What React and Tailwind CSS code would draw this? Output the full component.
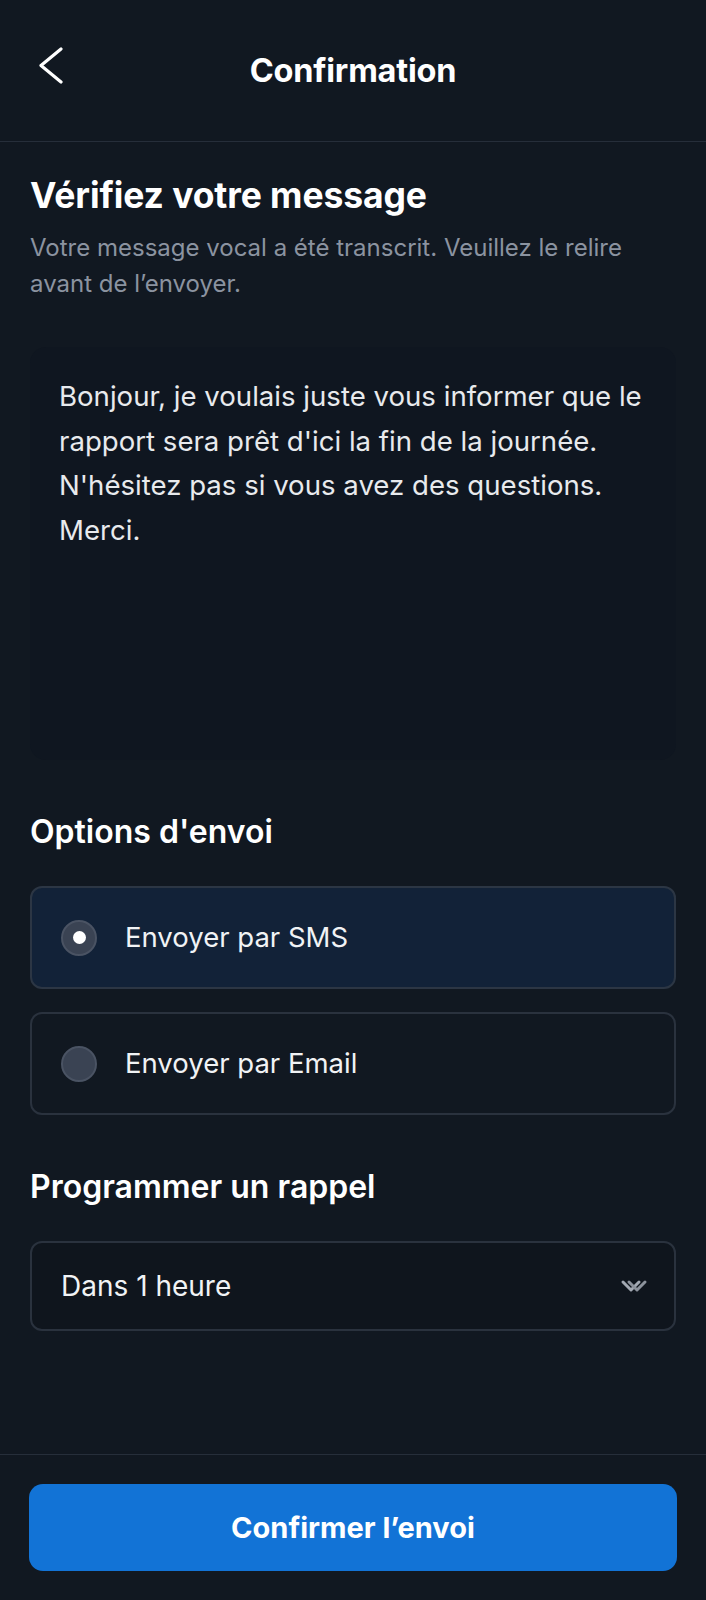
import React, { useState } from 'react';

const options = [
  { id: 'sms', label: 'Envoyer par SMS' },
  { id: 'email', label: 'Envoyer par Email' },
];

export default function App() {
  const [channel, setChannel] = useState('sms');

  return (
    <div className="h-screen flex flex-col bg-[#111821] text-white font-['Inter',sans-serif]">
      {/* Header */}
      <header className="relative h-[142px] shrink-0 flex items-center justify-center border-b border-[#262e3a]">
        <button className="absolute left-[38px] top-[47px]">
          <svg width="26" height="38" viewBox="0 0 26 38" fill="none">
            <path d="M23 2L3 18.5L23 35" stroke="white" strokeWidth="3.2" strokeLinecap="round" strokeLinejoin="round" />
          </svg>
        </button>
        <h1 className="text-[32.5px] font-bold tracking-[-0.2px] pt-[2px]">Confirmation</h1>
      </header>

      {/* Content */}
      <main className="flex-1 px-[30px] pt-[32px]">
        <h2 className="text-[35.5px] font-bold leading-[44px] tracking-[-0.1px]">Vérifiez votre message</h2>
        <p className="mt-[12px] text-[24px] leading-[36px] text-[#8b93a0]">
          Votre message vocal a été transcrit. Veuillez le relire avant de l’envoyer.
        </p>

        <div className="mt-[45px] h-[413px] rounded-[16px] bg-[#0f1620] pl-[29px] pr-[16px] pt-[27px]">
          <p className="text-[27.6px] leading-[44.6px] text-[#e8eaed]">
            Bonjour, je voulais juste vous informer que le rapport sera prêt d'ici la fin de la journée. N'hésitez pas si vous avez des questions. Merci.
          </p>
        </div>

        <h3 className="mt-[52px] text-[32px] font-semibold leading-[40px]">Options d'envoi</h3>
        <div className="mt-[34px] flex flex-col gap-[23px]">
          {options.map(opt => {
            const active = channel === opt.id;
            return (
              <button
                key={opt.id}
                onClick={() => setChannel(opt.id)}
                className={`h-[103px] rounded-[12px] border-2 flex items-center px-[29px] gap-[28px] text-left ${active ? 'bg-[#122238] border-[#2c3644]' : 'bg-[#111821] border-[#2a323e]'}`}
              >
                <span className="w-[36px] h-[36px] shrink-0 rounded-full bg-[#3a4353] border-2 border-[#4a5363] flex items-center justify-center">
                  {active && <span className="w-[13px] h-[13px] rounded-full bg-white" />}
                </span>
                <span className="text-[27.5px] text-[#f1f3f5]">{opt.label}</span>
              </button>
            );
          })}
        </div>

        <h3 className="mt-[52px] text-[32px] font-semibold leading-[40px]">Programmer un rappel</h3>
        <div className="mt-[34px] h-[90px] rounded-[12px] border-2 border-[#2a323e] bg-[#0f151d] flex items-center justify-between pl-[29px] pr-[26px]">
          <span className="text-[28px] text-[#f1f3f5]">Dans 1 heure</span>
          <svg width="28" height="16" viewBox="0 0 28 16" fill="none">
            <path d="M3 4L11 12L19 4" stroke="#a3a9b3" strokeWidth="3" strokeLinecap="round" strokeLinejoin="round" />
            <path d="M9 4L17 12L25 4" stroke="#8c929c" strokeWidth="3" strokeLinecap="round" strokeLinejoin="round" />
          </svg>
        </div>
      </main>

      {/* Footer */}
      <footer className="shrink-0 border-t border-[#262e3a] px-[29px] pt-[29px] pb-[29px]">
        <button className="w-full h-[87px] rounded-[14px] bg-[#1273d6] text-[29px] font-bold text-white">
          Confirmer l’envoi
        </button>
      </footer>
    </div>
  );
}
